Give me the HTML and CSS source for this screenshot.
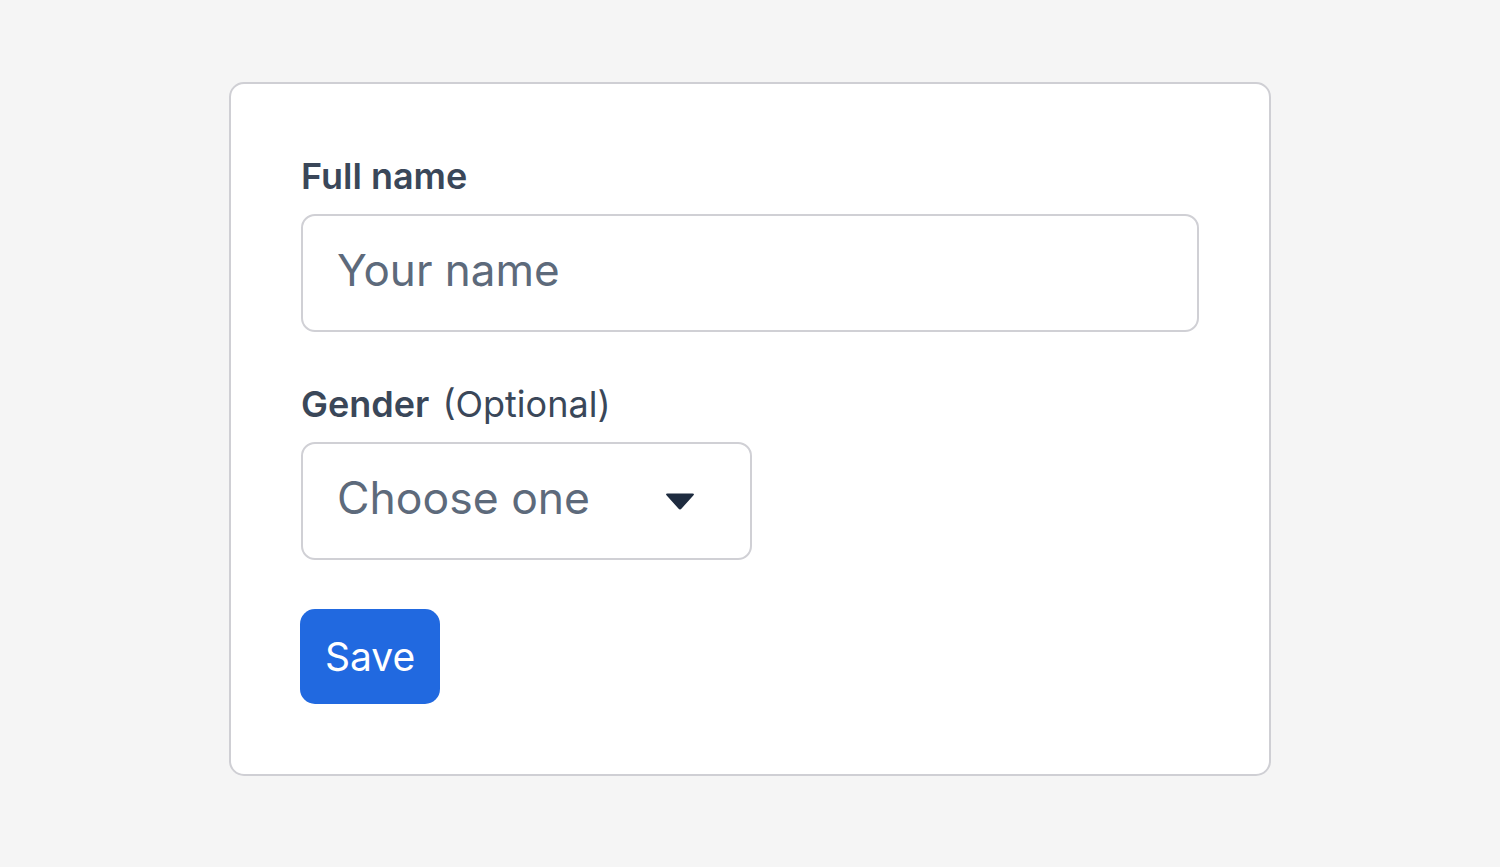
FILE: index.html
```html
<!DOCTYPE html>
<html lang="en">
<head>
<meta charset="utf-8">
<title>Profile form</title>
<link rel="stylesheet" href="styles.css">
</head>
<body>
<form class="card">
  <div class="field">
    <label class="label" for="name">Full name</label>
    <input class="input" id="name" type="text" placeholder="Your name">
  </div>
  <div class="field field-last">
    <label class="label" for="gender">Gender <span class="optional">(Optional)</span></label>
    <div class="select" id="gender">
      <span class="select-text">Choose one</span>
      <svg class="caret" width="30" height="18" viewBox="0 0 30 18" aria-hidden="true">
        <path d="M2.5 0.5 H27.5 Q30 0.5 28.3 2.4 L16.6 15.6 Q15 17.3 13.4 15.6 L1.7 2.4 Q0 0.5 2.5 0.5 Z" fill="#1e2b3f"/>
      </svg>
    </div>
  </div>
  <button class="btn" type="button">Save</button>
</form>
</body>
</html>
```
FILE: styles.css
```css
* { box-sizing: border-box; }
html, body { margin: 0; padding: 0; }
body {
  background: #f5f5f5;
  font-family: Inter, "Noto Sans", "Liberation Sans", sans-serif;
  width: 1500px;
  height: 867px;
  overflow: hidden;
}
.card {
  width: 1042px;
  margin: 82px auto 0;
  background: #ffffff;
  border: 2px solid #cfcfd4;
  border-radius: 15px;
  padding: 71px 70px 70px;
  display: flex;
  flex-direction: column;
  align-items: flex-start;
}
.field {
  display: flex;
  flex-direction: column;
  width: 100%;
  margin-bottom: 51px;
}
.field-last { margin-bottom: 49px; }
.label {
  font-size: 36px;
  font-weight: 600;
  line-height: 43px;
  color: #3a4759;
  margin-bottom: 16px;
}
.optional {
  font-weight: 400;
  margin-left: 4px;
}
.input {
  width: 100%;
  height: 118px;
  border: 2px solid #d0d0d5;
  border-radius: 14px;
  padding: 0 34px 6px;
  font-family: inherit;
  font-size: 44px;
  color: #1e293b;
  background: #fff;
  outline: none;
}
.input::placeholder { color: #5d6a7b; opacity: 1; }
.select {
  width: 451px;
  height: 118px;
  border: 2px solid #d0d0d5;
  border-radius: 14px;
  padding: 0 55px 6px 34px;
  display: flex;
  align-items: center;
  justify-content: space-between;
  font-size: 44.5px;
  color: #5d6a7b;
}
.caret { display: block; margin-top: 8px; }
.btn {
  height: 95px;
  padding: 0 25px;
  margin-left: -1px;
  background: #2169e0;
  color: #ffffff;
  border: none;
  border-radius: 15px;
  font-family: inherit;
  font-size: 39px;
  font-weight: 400;
}
```
